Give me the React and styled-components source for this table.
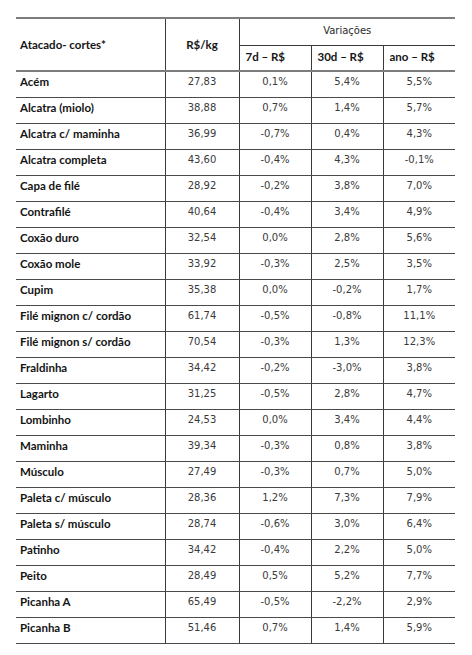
import React from 'react';
import styled, { createGlobalStyle } from 'styled-components';

const GlobalStyle = createGlobalStyle`
  html, body {
    margin: 0;
    padding: 0;
    background: #ffffff;
  }
`;

const Page = styled.div`
  padding: 17px 0 0 16px;
`;

const Table = styled.table`
  border-collapse: collapse;
  table-layout: fixed;
  width: 439px;
`;

const HeadCell = styled.th`
  font-family: Lato, 'Liberation Sans', sans-serif;
  font-weight: 700;
  font-size: 11.5px;
  color: #161616;
  text-align: ${(p) => p.$align || 'left'};
  padding: ${(p) => (p.$align === 'center' ? '0' : '0 4px')};
  height: ${(p) => p.$h}px;
  border-top: ${(p) => (p.$top ? '2px solid #7d7d7d' : 'none')};
  border-bottom: ${(p) => (p.$thick ? '2px solid #7d7d7d' : '1px solid #3a3a3a')};
  border-right: ${(p) => (p.$last ? 'none' : '1px solid #3a3a3a')};
  vertical-align: middle;
  box-sizing: border-box;
`;

const SpanTitle = styled(HeadCell)`
  font-family: 'DejaVu Sans', Verdana, sans-serif;
  font-weight: 400;
  font-size: 10px;
  color: #2a2a2a;
  padding-top: 2px;
  padding-bottom: 4px;
`;

const SubHead = styled(HeadCell)`
  padding: 0 6px 2px;
`;

const Row = styled.tr`
  height: 26px;
`;

const Label = styled.td`
  font-family: Lato, 'Liberation Sans', sans-serif;
  font-weight: 700;
  font-size: 11.5px;
  color: #141414;
  padding: 0 4px 5px;
  border-bottom: 1px solid #4a4a4a;
  border-right: 1px solid #3a3a3a;
  white-space: nowrap;
`;

const Num = styled.td`
  font-family: 'DejaVu Sans', Verdana, sans-serif;
  font-size: 10px;
  color: #3a3a3a;
  text-align: center;
  padding: 0 0 5px;
  border-bottom: 1px solid #4a4a4a;
  border-right: ${(p) => (p.$last ? 'none' : '1px solid #3a3a3a')};
`;

const rows = [
  ['Acém', '27,83', '0,1%', '5,4%', '5,5%'],
  ['Alcatra (miolo)', '38,88', '0,7%', '1,4%', '5,7%'],
  ['Alcatra c/ maminha', '36,99', '-0,7%', '0,4%', '4,3%'],
  ['Alcatra completa', '43,60', '-0,4%', '4,3%', '-0,1%'],
  ['Capa de filé', '28,92', '-0,2%', '3,8%', '7,0%'],
  ['Contrafilé', '40,64', '-0,4%', '3,4%', '4,9%'],
  ['Coxão duro', '32,54', '0,0%', '2,8%', '5,6%'],
  ['Coxão mole', '33,92', '-0,3%', '2,5%', '3,5%'],
  ['Cupim', '35,38', '0,0%', '-0,2%', '1,7%'],
  ['Filé mignon c/ cordão', '61,74', '-0,5%', '-0,8%', '11,1%'],
  ['Filé mignon s/ cordão', '70,54', '-0,3%', '1,3%', '12,3%'],
  ['Fraldinha', '34,42', '-0,2%', '-3,0%', '3,8%'],
  ['Lagarto', '31,25', '-0,5%', '2,8%', '4,7%'],
  ['Lombinho', '24,53', '0,0%', '3,4%', '4,4%'],
  ['Maminha', '39,34', '-0,3%', '0,8%', '3,8%'],
  ['Músculo', '27,49', '-0,3%', '0,7%', '5,0%'],
  ['Paleta c/ músculo', '28,36', '1,2%', '7,3%', '7,9%'],
  ['Paleta s/ músculo', '28,74', '-0,6%', '3,0%', '6,4%'],
  ['Patinho', '34,42', '-0,4%', '2,2%', '5,0%'],
  ['Peito', '28,49', '0,5%', '5,2%', '7,7%'],
  ['Picanha A', '65,49', '-0,5%', '-2,2%', '2,9%'],
  ['Picanha B', '51,46', '0,7%', '1,4%', '5,9%'],
];

export default function App() {
  return (
    <Page>
      <GlobalStyle />
      <Table>
        <colgroup>
          <col style={{ width: 149 }} />
          <col style={{ width: 74 }} />
          <col style={{ width: 72 }} />
          <col style={{ width: 72 }} />
          <col style={{ width: 72 }} />
        </colgroup>
        <thead>
          <tr>
            <HeadCell rowSpan={2} $top $thick $h={27}>Atacado- cortes*</HeadCell>
            <HeadCell rowSpan={2} $top $thick $align="center" $h={27}>R$/kg</HeadCell>
            <SpanTitle colSpan={3} $top $last $align="center" $h={27}>Variações</SpanTitle>
          </tr>
          <tr>
            <SubHead $thick $h={26}>7d – R$</SubHead>
            <SubHead $thick $h={26}>30d – R$</SubHead>
            <SubHead $thick $last $h={26}>ano – R$</SubHead>
          </tr>
        </thead>
        <tbody>
          {rows.map(([name, price, d7, d30, year]) => (
            <Row key={name}>
              <Label>{name}</Label>
              <Num>{price}</Num>
              <Num>{d7}</Num>
              <Num>{d30}</Num>
              <Num $last>{year}</Num>
            </Row>
          ))}
        </tbody>
      </Table>
    </Page>
  );
}
